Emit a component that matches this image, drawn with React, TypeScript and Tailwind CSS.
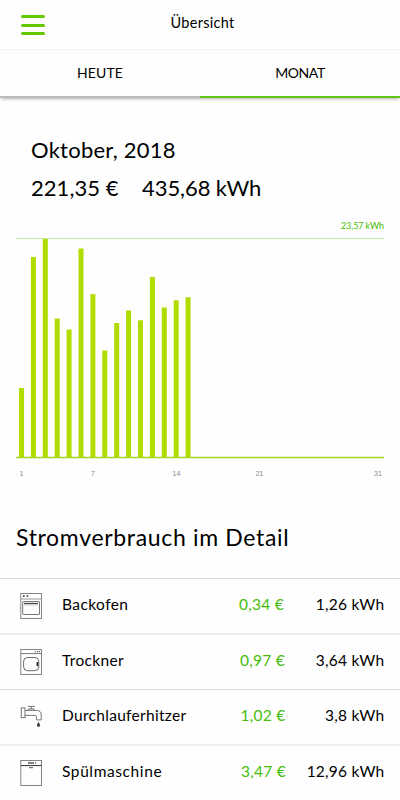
import type { ReactNode } from "react";
import { clsx } from "clsx";

const CHART_HEIGHT = 218;
const BAR_PITCH = 11.9;

// Bar heights per day, in chart units
const days = [69.5, 200.5, 218.5, 139, 128, 209, 163.3, 107, 134.5, 147, 137.2, 180.5, 150, 157.2, 160.2];

const ticks = [
  { label: "1", x: 5.5 },
  { label: "7", x: 77 },
  { label: "14", x: 160.5 },
  { label: "21", x: 243.3 },
  { label: "31", x: 362 },
];

function OvenIcon() {
  return (
    <svg width="22" height="26" viewBox="0 0 22 26" fill="none" stroke="#777">
      <rect x="0.8" y="0.5" width="20.7" height="25" strokeWidth="0.9" />
      <path d="M0.8 6h20.7" stroke="#999" />
      <path d="M3 3h1.6M6.6 3h1.6" stroke="#222" strokeWidth="1.5" />
      <rect x="2.7" y="8.5" width="16.8" height="13" rx="0.5" />
      <path d="M4 10.5h14" strokeWidth="1.3" stroke="#444" />
      <path d="M4.5 12.2h13" stroke="#bbb" strokeWidth="0.7" />
    </svg>
  );
}

function DryerIcon() {
  return (
    <svg width="22" height="26" viewBox="0 0 22 26" fill="none" stroke="#777">
      <rect x="0.8" y="0.5" width="20.7" height="25" strokeWidth="0.9" />
      <path d="M0.8 4.6h20.7" stroke="#777" />
      <path d="M14.7 2.6h1M16.9 2.6h1M19 2.6h1" stroke="#333" />
      <rect x="3.6" y="8.5" width="15.2" height="13.2" rx="4" stroke="#444" strokeWidth="0.8" />
      <path d="M17.4 13v4.2" stroke="#333" strokeWidth="1.8" />
    </svg>
  );
}

function TapIcon() {
  return (
    <svg width="22" height="26" viewBox="0 0 22 26" fill="none" stroke="#555" strokeWidth="0.8">
      <rect x="1.2" y="3.9" width="3.8" height="9.8" />
      <path d="M5 6.4h11.5q4.7 0 4.7 4.5v5h-4.7v-3q0-1.5-1.5-1.5H5" />
      <path d="M8.7 6.3V4.9h5.3v1.4M11.3 4.9V2.6M8 2.4h6.8" />
      <path d="M18.5 17.8c-2.2 3.2-2 5 0 5s2.2-1.8 0-5z" fill="#444" stroke="none" />
    </svg>
  );
}

function DishwasherIcon() {
  return (
    <svg width="22" height="26" viewBox="0 0 22 26" fill="none" stroke="#777">
      <rect x="0.8" y="0.5" width="20.7" height="25" strokeWidth="0.9" />
      <path d="M0.8 5.6h20.7" stroke="#333" />
      <path d="M8 3h6M15.2 3h1" stroke="#555" strokeWidth="1.3" />
      <path d="M9 7.7h4" stroke="#444" strokeWidth="0.9" />
    </svg>
  );
}

interface Device {
  name: string;
  cost: string;
  usage: string;
  icon: ReactNode;
  nameClass: string;
  costClass: string;
}

const devices: Device[] = [
  { name: "Backofen", cost: "0,34 €", usage: "1,26 kWh", icon: <OvenIcon />, nameClass: "tracking-[0.42px]", costClass: "mr-[100.5px]" },
  { name: "Trockner", cost: "0,97 €", usage: "3,64 kWh", icon: <DryerIcon />, nameClass: "tracking-[0.35px]", costClass: "mr-[99.5px]" },
  { name: "Durchlauferhitzer", cost: "1,02 €", usage: "3,8 kWh", icon: <TapIcon />, nameClass: "tracking-[0.3px]", costClass: "mr-[99px]" },
  { name: "Spülmaschine", cost: "3,47 €", usage: "12,96 kWh", icon: <DishwasherIcon />, nameClass: "tracking-[0.6px]", costClass: "mr-[98.5px]" },
];

function MonthChart() {
  return (
    <svg className="mx-4 block" width="368" height="221" viewBox="0 0 368 221">
      <path d="M0 0.5h368" stroke="#bde8a8" />
      {days.map((height, i) => (
        <rect key={i} x={3 + i * BAR_PITCH} y={CHART_HEIGHT + 1.5 - height} width="5" height={height} fill="#b0dc00" />
      ))}
      <path d="M0 219.5h368" stroke="#a6d51f" strokeWidth="1.4" />
    </svg>
  );
}

export default function App() {
  return (
    <div className="h-[800px] w-[400px] overflow-hidden bg-[#fefefe] font-['Lato',sans-serif] text-black">
      {/* Header */}
      <header className="grid h-[50px] grid-cols-[1fr_auto_1fr] border-b border-[#f3f3f3]">
        <button className="ml-[20.5px] mt-[15px] flex h-5 w-6 flex-col justify-between" aria-label="Menü">
          <span className="h-[3px] w-6 rounded-full bg-[#65c800]" />
          <span className="h-[3px] w-6 rounded-full bg-[#65c800]" />
          <span className="h-[3px] w-6 rounded-full bg-[#65c800]" />
        </button>
        <h1 className="ml-[5px] mt-[13px] text-[14.5px] leading-5 tracking-[0.3px]">Übersicht</h1>
      </header>

      {/* Tabs */}
      <nav className="grid h-[47px] grid-cols-2 text-center text-[14px] leading-[46px] shadow-[0_3px_3px_-1px_rgba(0,0,0,0.3)]">
        <button className="border-b-2 border-[#bababa] tracking-[0.1px]">HEUTE</button>
        <button className="border-b-2 border-[#5fc512] tracking-[-0.4px]">MONAT</button>
      </nav>

      {/* Month totals */}
      <section className="mt-[34px] h-[107px] px-[31px] text-[22px] leading-[38px]">
        <h2 className="tracking-[0.25px]">Oktober, 2018</h2>
        <div className="flex gap-[23.5px]">
          <span className="tracking-[0.05px]">221,35 €</span>
          <span className="tracking-[-0.1px]">435,68 kWh</span>
        </div>
        <p className="-mr-[15px] text-right text-[9px] leading-[38px] tracking-[-0.1px] text-[#46b900]">23,57 kWh</p>
      </section>

      <MonthChart />
      <div className="relative mx-4 mt-[9px] h-3 font-['Liberation_Sans',sans-serif] text-[7px] leading-3 text-[#888]">
        {ticks.map((tick) => (
          <span key={tick.label} className="absolute -translate-x-1/2" style={{ left: tick.x }}>
            {tick.label}
          </span>
        ))}
      </div>

      {/* Devices */}
      <h2 className="mt-[39px] h-[59px] px-4 text-[23px] leading-[36px] tracking-[0.67px]">Stromverbrauch im Detail</h2>
      <ul className="text-[15.5px]">
        {devices.map((device, i) => (
          <li
            key={device.name}
            className={clsx(
              "grid grid-cols-[62px_1fr_auto] items-center pr-[15.5px]",
              i % 2 === 0 ? "h-[55px] border-t border-[#dadada]" : "h-14 border-t-2 border-[#eeeeee]"
            )}
          >
            <span className="ml-5">{device.icon}</span>
            <span className={clsx("-mt-[2px]", device.nameClass)}>{device.name}</span>
            <div className="-mt-[2px] grid items-center justify-items-end tracking-[0.25px]">
              <span className={clsx("col-start-1 row-start-1 text-[#46bd0c]", device.costClass)}>{device.cost}</span>
              <span className="col-start-1 row-start-1">{device.usage}</span>
            </div>
          </li>
        ))}
      </ul>
    </div>
  );
}
